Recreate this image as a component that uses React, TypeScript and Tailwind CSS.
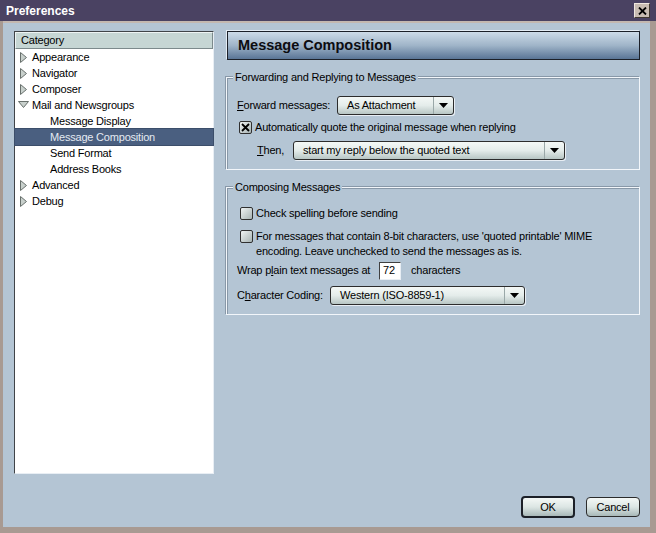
import React from "react";

const font = { fontFamily: '"Liberation Sans", Arial, sans-serif' };

function Tri({ down }: { down?: boolean }) {
  return down ? (
    <svg width="11" height="8" viewBox="0 0 11 8" className="block">
      <polygon points="0.5,0.5 10.5,0.5 5.5,6.5" fill="#c8d0cc" stroke="#68706c" />
    </svg>
  ) : (
    <svg width="8" height="11" viewBox="0 0 8 11" className="block">
      <polygon points="0.5,0.5 6.5,5.5 0.5,10.5" fill="#c8d0cc" stroke="#68706c" />
    </svg>
  );
}

function TreeRow({
  label,
  level,
  tri,
  selected,
}: {
  label: string;
  level: number;
  tri?: "right" | "down";
  selected?: boolean;
}) {
  return (
    <div
      className={
        "h-[16px] flex items-center text-[11px] tracking-[-0.2px] leading-[16px] whitespace-nowrap " +
        (selected ? "bg-[#4a5f80] text-[#e4eaf2] outline outline-1 outline-[#3c4e6a]" : "text-black")
      }
    >
      {level === 0 ? (
        <>
          <div className="w-[17px] flex justify-end pr-[4px]">
            {tri === "down" ? (
              <div className="-mr-[1px]">
                <Tri down />
              </div>
            ) : (
              <Tri />
            )}
          </div>
          <span>{label}</span>
        </>
      ) : (
        <span className="pl-[35px]">{label}</span>
      )}
    </div>
  );
}

function Arrow() {
  return (
    <svg width="9" height="5" viewBox="0 0 9 5" className="block">
      <polygon points="0,0 9,0 4.5,5" fill="#000" />
    </svg>
  );
}

function Dropdown({ text, width, btn = 20 }: { text: string; width: number; btn?: number }) {
  return (
    <div
      className="h-[19px] shrink-0 flex rounded-[3px] border border-[#2c2c2c] bg-gradient-to-b from-[#f4f8f6] via-[#e4ecea] to-[#b8c6c4] shadow-[1px_1px_0_#e8eef4]"
      style={{ width }}
    >
      <div className="flex-1 flex items-center pl-[9px] text-[11px] tracking-[-0.2px] leading-none text-black whitespace-nowrap">
        {text}
      </div>
      <div
        className="flex items-center justify-center border-l border-[#9aa8a8]"
        style={{ width: btn }}
      >
        <Arrow />
      </div>
    </div>
  );
}

function Check({ checked }: { checked?: boolean }) {
  return (
    <div className="w-[13px] h-[13px] rounded-[2px] border border-[#303030] bg-gradient-to-br from-[#f0f4f4] to-[#a8b4b4] flex items-center justify-center shrink-0">
      {checked && (
        <svg width="9" height="9" viewBox="0 0 9 9" className="block">
          <path d="M1 1 L8 8 M8 1 L1 8" stroke="#000" strokeWidth="1.8" />
        </svg>
      )}
    </div>
  );
}

function Group({
  title,
  height,
  children,
}: {
  title: string;
  height: number;
  children: React.ReactNode;
}) {
  return (
    <div
      className="relative border border-[#f2f6fa] shadow-[inset_1px_1px_0_#8898a8,-1px_-1px_0_#8898a8]"
      style={{ height }}
    >
      <span className="absolute -top-[8px] left-[6px] bg-[#b4c5d4] px-[2px] text-[11px] tracking-[-0.2px] leading-[14px] text-black whitespace-nowrap">
        {title}
      </span>
      {children}
    </div>
  );
}

const row = "flex items-center text-[11px] tracking-[-0.2px] whitespace-nowrap text-black";

export default function App() {
  return (
    <div className="w-[656px] h-[533px] bg-[#a89a92] pl-[3px] pr-[6px] pb-[6px] flex flex-col" style={font}>
      <div className="h-[21px] -ml-[3px] -mr-[6px] bg-[#4a4262] flex items-center justify-between pl-[6px] pr-[6px]">
        <span className="text-white font-bold text-[12px] leading-none">Preferences</span>
        <div className="w-[16px] h-[15px] bg-[#c8bcb2] border border-t-[#f0e8e0] border-l-[#f0e8e0] border-r-[#403830] border-b-[#403830] flex items-center justify-center">
          <svg width="9" height="8" viewBox="0 0 9 8" className="block">
            <path d="M1 0.5 L8 7.5 M8 0.5 L1 7.5" stroke="#000" strokeWidth="1.8" />
          </svg>
        </div>
      </div>
      <div className="h-[2px] bg-[#c4b8b0]" />
      <div className="flex-1 bg-[#b4c5d4] flex flex-col pl-[11px] pr-[10px] pt-[8px]">
        <div className="flex h-[443px]">
          {/* tree */}
          <div className="w-[201px] h-full bg-white border-l border-t border-[#404448] border-r-[#e8eef4] border-b-[#e8eef4] border-r border-b">
            <div className="h-[17px] bg-[#c6d6d4] border-b border-r border-[#7c8a8c] border-t border-l border-t-[#eef4f4] border-l-[#eef4f4] flex items-center pl-[5px] text-[11px] tracking-[-0.2px] text-black">
              Category
            </div>
            <TreeRow label="Appearance" level={0} />
            <TreeRow label="Navigator" level={0} />
            <TreeRow label="Composer" level={0} />
            <TreeRow label="Mail and Newsgroups" level={0} tri="down" />
            <TreeRow label="Message Display" level={1} />
            <TreeRow label="Message Composition" level={1} selected />
            <TreeRow label="Send Format" level={1} />
            <TreeRow label="Address Books" level={1} />
            <TreeRow label="Advanced" level={0} />
            <TreeRow label="Debug" level={0} />
          </div>
          {/* right */}
          <div className="ml-[12px] w-[416px] flex flex-col">
            <div className="ml-[1px] w-[413px] h-[29px] border border-[#1c2028] bg-gradient-to-b from-[#cddbe8] via-[#9fb4c8] to-[#5a7596] flex items-center pl-[10px] shadow-[-1px_-1px_0_#e4ecf4]">
              <span className="font-bold text-[14.5px] leading-none text-[#0c0c10] whitespace-nowrap">
                Message Composition
              </span>
            </div>
            <div className="mt-[17px]">
              <Group title="Forwarding and Replying to Messages" height={93}>
                <div className={"pl-[10px] pt-[18px] " + row}>
                  <span className="w-[100px] shrink-0">
                    <span className="underline">F</span>orward messages:
                  </span>
                  <Dropdown text="As Attachment" width={117} />
                </div>
                <div className={"pl-[12px] mt-[4px] gap-[3px] " + row}>
                  <Check checked />
                  <span>Automatically quote the original message when replying</span>
                </div>
                <div className={"pl-[30px] mt-[5px] " + row}>
                  <span className="w-[36px] shrink-0">
                    <span className="underline">T</span>hen,
                  </span>
                  <Dropdown text="start my reply below the quoted text" width={272} />
                </div>
              </Group>
            </div>
            <div className="mt-[17px]">
              <Group title="Composing Messages" height={128}>
                <div className={"pl-[13px] pt-[17px] gap-[3px] " + row}>
                  <Check />
                  <span>Check spelling before sending</span>
                </div>
                <div className="pl-[13px] mt-[7px] flex items-start gap-[3px] text-[11px] tracking-[-0.2px] leading-[15px] whitespace-nowrap text-black">
                  <div className="mt-[1px]">
                    <Check />
                  </div>
                  <span>
                    For messages that contain 8-bit characters, use 'quoted printable' MIME
                    <br />
                    encoding. Leave unchecked to send the messages as is.
                  </span>
                </div>
                <div className={"pl-[10px] mt-[3px] " + row}>
                  <span className="w-[142px] shrink-0">
                    Wrap p<span className="underline">l</span>ain text messages at
                  </span>
                  <div className="w-[22px] h-[18px] shrink-0 bg-white border border-t-[#404040] border-l-[#404040] border-r-[#e8eef4] border-b-[#e8eef4] flex items-center pl-[3px]">
                    72
                  </div>
                  <span className="ml-[10px]">characters</span>
                </div>
                <div className={"pl-[10px] mt-[6px] " + row}>
                  <span className="w-[93px] shrink-0">
                    C<span className="underline">h</span>aracter Coding:
                  </span>
                  <Dropdown text="Western (ISO-8859-1)" width={195} />
                </div>
              </Group>
            </div>
          </div>
        </div>
        <div className="mt-[22px] flex justify-end items-center gap-[11px]">
          <div className="w-[54px] h-[22px] rounded-[4px] border-2 border-[#1c2028] bg-gradient-to-b from-[#f4f8f6] via-[#dce6e4] to-[#a8b8b8] flex items-center justify-center text-[11px] tracking-[-0.2px] text-black">
            OK
          </div>
          <div className="w-[54px] h-[20px] rounded-[4px] border border-[#2c2c2c] bg-gradient-to-b from-[#f4f8f6] via-[#dce6e4] to-[#a8b8b8] flex items-center justify-center text-[11px] tracking-[-0.2px] text-black">
            Cancel
          </div>
        </div>
      </div>
    </div>
  );
}
